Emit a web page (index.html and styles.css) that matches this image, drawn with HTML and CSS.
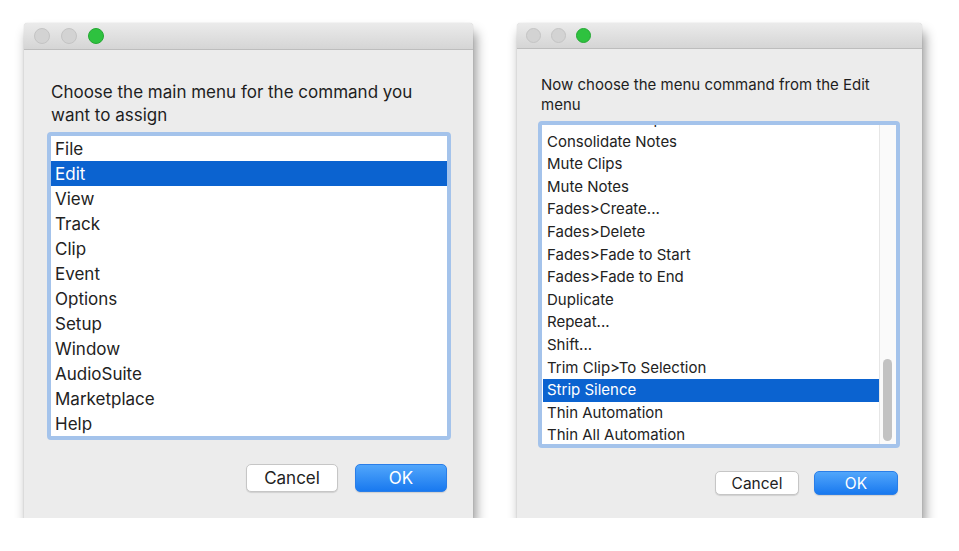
FILE: index.html
```html
<!DOCTYPE html>
<html lang="en">
<head>
    <meta charset="UTF-8">
    <title>Assign Menu Command</title>
    <link rel="stylesheet" href="styles.css">
</head>
<body>
    <div class="stage">
        <!-- step 1: pick the main menu -->
        <div class="window win-main">
            <div class="titlebar">
                <span class="light"></span>
                <span class="light"></span>
                <span class="light green"></span>
            </div>
            <div class="content">
                <p class="prompt">Choose the main menu for the command you want to assign</p>
                <div class="listbox">
                    <ul class="items">
                        <li>File</li>
                        <li class="selected">Edit</li>
                        <li>View</li>
                        <li>Track</li>
                        <li>Clip</li>
                        <li>Event</li>
                        <li>Options</li>
                        <li>Setup</li>
                        <li>Window</li>
                        <li>AudioSuite</li>
                        <li>Marketplace</li>
                        <li>Help</li>
                    </ul>
                </div>
                <div class="buttons">
                    <button class="btn">Cancel</button>
                    <button class="btn primary">OK</button>
                </div>
            </div>
        </div>

        <!-- step 2: pick the command inside that menu -->
        <div class="window win-cmd">
            <div class="titlebar">
                <span class="light"></span>
                <span class="light"></span>
                <span class="light green"></span>
            </div>
            <div class="content">
                <p class="prompt">Now choose the menu command from the Edit menu</p>
                <div class="listbox">
                    <div class="viewport">
                        <ul class="items scrolled">
                            <li>Consolidate Clip</li>
                            <li>Consolidate Notes</li>
                            <li>Mute Clips</li>
                            <li>Mute Notes</li>
                            <li>Fades&gt;Create...</li>
                            <li>Fades&gt;Delete</li>
                            <li>Fades&gt;Fade to Start</li>
                            <li>Fades&gt;Fade to End</li>
                            <li>Duplicate</li>
                            <li>Repeat...</li>
                            <li>Shift...</li>
                            <li>Trim Clip&gt;To Selection</li>
                            <li class="selected">Strip Silence</li>
                            <li>Thin Automation</li>
                            <li>Thin All Automation</li>
                        </ul>
                    </div>
                    <div class="scrollbar"><div class="thumb"></div></div>
                </div>
                <div class="buttons">
                    <button class="btn">Cancel</button>
                    <button class="btn primary">OK</button>
                </div>
            </div>
        </div>
    </div>
</body>
</html>
```

FILE: styles.css
```css
body {
    margin: 0;
    background: #fff;
    font-family: Inter, "Noto Sans", sans-serif;
    color: #222;
}

.stage {
    display: flex;
    gap: 44px;
    padding: 23px 0 0 24px;
}

.window {
    display: flex;
    flex-direction: column;
    height: 495px;
    background: #ececec;
    border-radius: 4px 4px 0 0;
    box-shadow: 3px 9px 12px rgba(0, 0, 0, 0.42), 0 0 1px rgba(0, 0, 0, 0.3);
}

.win-main { width: 449px; }
.win-cmd { width: 405px; }

.titlebar {
    display: flex;
    align-items: center;
    gap: 11px;
    padding-left: 10px;
    height: 26px;
    background: linear-gradient(#ebebeb, #d5d5d5);
    border-bottom: 1px solid #bdbdbd;
    border-radius: 4px 4px 0 0;
}

.light {
    width: 14px;
    height: 14px;
    border-radius: 50%;
    background: #d3d3d3;
    border: 1px solid #c4c4c4;
}

.light.green {
    background: #2ec23f;
    border-color: #24a833;
}

.win-cmd .titlebar {
    height: 25px;
    gap: 10px;
    padding-left: 9px;
}

.win-cmd .light {
    width: 13px;
    height: 13px;
}

.content {
    display: flex;
    flex-direction: column;
    flex: 1;
}

.win-main .content { padding: 31px 22px 0 23px; }
.win-cmd .content { padding: 26px 22px 0 21px; }

.prompt {
    margin: 0;
    color: #1e1e1e;
}

.win-main .prompt {
    font-size: 17px;
    line-height: 23px;
    padding-left: 4px;
    margin-bottom: 5px;
}

.win-cmd .prompt {
    font-size: 15px;
    line-height: 20px;
    padding-left: 3px;
    margin-bottom: 6px;
}

.listbox {
    display: flex;
    background: #fff;
    border: 4px solid #a4c3eb;
    border-radius: 4px;
    overflow: hidden;
}

.win-main .listbox { height: 300px; }
.win-cmd .listbox { height: 319px; }

.viewport {
    flex: 1;
    overflow: hidden;
}

.items {
    list-style: none;
    margin: 0;
    padding: 0;
    flex: 1;
}

.items li {
    padding-left: 4px;
    white-space: nowrap;
    color: #222;
}

.win-main .items li {
    font-size: 17px;
    line-height: 23px;
    padding-top: 2px;
}

.win-cmd .items li {
    font-size: 15px;
    line-height: 22.6px;
}

/* list is scrolled: first row only peeks in at the top */
.items.scrolled {
    margin-top: -17px;
    margin-left: 1px;
}

.items li.selected {
    background: #0b63d0;
    color: #fff;
}

.scrollbar {
    width: 16px;
    padding-top: 234px;
    background: #fafafa;
    border-left: 1px solid #e6e6e6;
}

.thumb {
    width: 9px;
    height: 82px;
    margin-left: 3px;
    border-radius: 5px;
    background: #c2c2c2;
}

.buttons {
    display: flex;
    justify-content: flex-end;
}

.win-main .buttons {
    gap: 17px;
    margin-top: 24px;
    padding-right: 4px;
}

.win-cmd .buttons {
    gap: 15px;
    margin-top: 23px;
    padding-right: 2px;
}

.btn {
    font-family: inherit;
    color: #222;
    background: #fff;
    border: 1px solid #c6c6c6;
    border-radius: 5px;
    box-shadow: 0 1px 1px rgba(0, 0, 0, 0.12);
    padding: 0;
}

.btn.primary {
    color: #fff;
    background: linear-gradient(#51a6fb, #1979ef);
    border-color: #2a7ee8;
}

.win-main .btn {
    width: 92px;
    height: 28px;
    font-size: 17px;
}

.win-cmd .btn {
    width: 84px;
    height: 24px;
    font-size: 15.5px;
}
```
